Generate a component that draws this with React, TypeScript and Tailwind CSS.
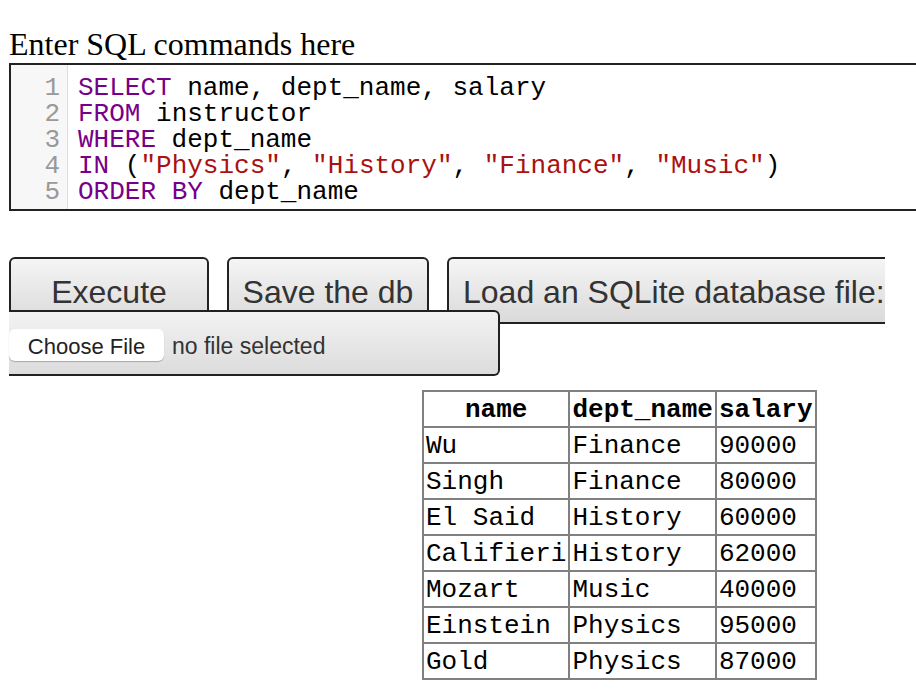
import React from "react";

const K = ({ children }: { children: React.ReactNode }) => (
  <span className="text-[#770088]">{children}</span>
);
const S = ({ children }: { children: React.ReactNode }) => (
  <span className="text-[#aa1111]">{children}</span>
);

const rows: [string, string, string][] = [
  ["Wu", "Finance", "90000"],
  ["Singh", "Finance", "80000"],
  ["El Said", "History", "60000"],
  ["Califieri", "History", "62000"],
  ["Mozart", "Music", "40000"],
  ["Einstein", "Physics", "95000"],
  ["Gold", "Physics", "87000"],
];

const mono = { fontFamily: '"Liberation Mono", "Courier New", monospace' };
const sans = { fontFamily: '"Liberation Sans", Arial, sans-serif' };

export default function App() {
  const btn =
    "h-[67px] border-2 border-[#222] rounded-[6px] bg-gradient-to-b from-[#f5f5f5] to-[#dadada] text-[32px] text-[#333] flex items-center whitespace-nowrap overflow-hidden pt-[2px]";
  return (
    <div className="w-[916px] h-[698px] overflow-hidden bg-white">
      <div className="pl-[9px] pt-[26px]">
        <div
          className="text-[32px] leading-[37px] text-black"
          style={{ fontFamily: '"Liberation Serif", "Times New Roman", serif' }}
        >
          Enter SQL commands here
        </div>
        <div className="w-[930px] border-2 border-[#222] flex text-[26px] leading-[26px]" style={mono}>
          <div className="w-[57px] bg-[#f7f7f7] border-r border-[#dddddd] text-[#999] text-right pr-[7px] pt-[10px] pb-[4px]">
            <div>1</div>
            <div>2</div>
            <div>3</div>
            <div>4</div>
            <div>5</div>
          </div>
          <div className="pl-[10px] pt-[10px] pb-[4px] text-black whitespace-pre">
            <div>
              <K>SELECT</K> name, dept_name, salary
            </div>
            <div>
              <K>FROM</K> instructor
            </div>
            <div>
              <K>WHERE</K> dept_name
            </div>
            <div>
              <K>IN</K> (<S>"Physics"</S>, <S>"History"</S>, <S>"Finance"</S>, <S>"Music"</S>)
            </div>
            <div>
              <K>ORDER</K> <K>BY</K> dept_name
            </div>
          </div>
        </div>

        <div className="mt-[46px] flex gap-[18px]" style={sans}>
          <div className={btn + " w-[200px] justify-center"}>Execute</div>
          <div className={btn + " w-[202px] justify-center"}>Save the db</div>
          <div className={btn + " w-[438px] pl-[14px] border-r-0 rounded-r-none"}>
            Load an SQLite database file:
          </div>
        </div>
        <div
          className="relative -mt-[14px] w-[491px] h-[66px] border-2 border-l-0 border-[#222] rounded-r-[6px] bg-gradient-to-b from-[#f3f3f3] to-[#dcdcdc] flex items-start pt-[17px]"
          style={sans}
        >
          <div className="h-[32px] w-[155px] bg-white rounded-[6px] shadow-[0_1px_1px_rgba(0,0,0,0.25)] text-[22px] text-[#222] flex items-center justify-center pt-[2px]">
            Choose File
          </div>
          <div className="ml-[8px] h-[32px] flex items-center text-[23px] text-[#333] pt-[3px]">no file selected</div>
        </div>

        <div className="mt-[14px] ml-[413px]">
          <table className="border-collapse border-2 border-[#808080] text-[26px] leading-[30px] text-black" style={mono}>
            <thead>
              <tr>
                <th className="border-2 border-[#808080] px-[2px] pt-[3px] pb-[1px] font-bold text-center">name</th>
                <th className="border-2 border-[#808080] px-[2px] pt-[3px] pb-[1px] font-bold text-center">dept_name</th>
                <th className="border-2 border-[#808080] px-[2px] pt-[3px] pb-[1px] font-bold text-center">salary</th>
              </tr>
            </thead>
            <tbody>
              {rows.map((r) => (
                <tr key={r[0]}>
                  {r.map((c, i) => (
                    <td key={i} className="border-2 border-[#808080] px-[2px] pt-[3px] pb-[1px] whitespace-pre">
                      {c}
                    </td>
                  ))}
                </tr>
              ))}
            </tbody>
          </table>
        </div>
      </div>
    </div>
  );
}
